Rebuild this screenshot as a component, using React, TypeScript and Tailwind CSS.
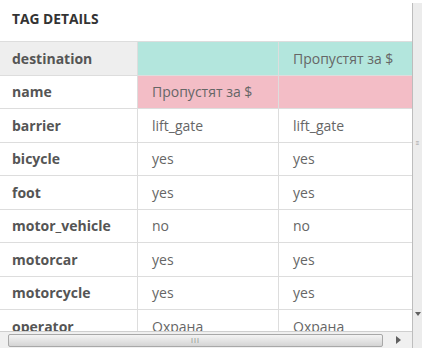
const rows: { key: string; a: string; b: string; tone?: "teal" | "pink" }[] = [
  { key: "destination", a: "", b: "Пропустят за $", tone: "teal" },
  { key: "name", a: "Пропустят за $", b: "", tone: "pink" },
  { key: "barrier", a: "lift_gate", b: "lift_gate" },
  { key: "bicycle", a: "yes", b: "yes" },
  { key: "foot", a: "yes", b: "yes" },
  { key: "motor_vehicle", a: "no", b: "no" },
  { key: "motorcar", a: "yes", b: "yes" },
  { key: "motorcycle", a: "yes", b: "yes" },
  { key: "operator", a: "Охрана", b: "Охрана" },
];

export default function App() {
  return (
    <div
      className="flex h-[348px] w-[422px] overflow-hidden bg-white"
      style={{ fontFamily: '"Open Sans", sans-serif' }}
    >
      <div className="flex w-[412px] flex-col">
        <div className="flex-1 overflow-hidden">
          <h2 className="px-3 pt-[9px] pb-[13px] text-[13.8px] leading-[19px] font-bold text-[#333]">
            TAG DETAILS
          </h2>
          <div className="w-[420px] border-t border-[#ddd]">
            {rows.map((r) => {
              const bg =
                r.tone === "teal"
                  ? "bg-[#b3e6dd]"
                  : r.tone === "pink"
                    ? "bg-[#f3bdc6]"
                    : "bg-white";
              return (
                <div key={r.key} className="flex h-[33.5px] border-b border-[#ddd] text-[14px]">
                  <div
                    className={`flex w-[138px] shrink-0 items-center border-r border-[#ddd] pl-3 font-bold text-[#555] ${
                      r.key === "destination" ? "bg-[#eeeeee]" : "bg-white"
                    }`}
                  >
                    {r.key}
                  </div>
                  <div
                    className={`flex w-[141px] shrink-0 items-center border-r border-[#ddd] pl-[14px] text-[#666] ${bg}`}
                  >
                    {r.a}
                  </div>
                  <div className={`flex w-[141px] shrink-0 items-center pl-[14px] text-[#666] ${bg}`}>
                    {r.b}
                  </div>
                </div>
              );
            })}
          </div>
        </div>
        <div className="flex h-[17px] shrink-0 items-center border-t border-[#cfcfcf] bg-[#f0f0f0]">
          <div className="ml-[8px] flex h-[13px] w-[375px] items-center justify-center rounded-[2px] border border-[#a8a8a8] bg-gradient-to-b from-[#f4f4f4] to-[#d4d4d4]">
            <span className="text-[7px] leading-none tracking-[1px] text-[#888]">III</span>
          </div>
          <div className="flex flex-1 items-center justify-center">
            <svg width="6" height="8" viewBox="0 0 6 8">
              <path d="M1 0 L6 4 L1 8 Z" fill="#606060" />
            </svg>
          </div>
        </div>
      </div>
      <div className="flex w-[10px] flex-col pt-[3px]">
        <div className="flex flex-1 flex-col border-l border-[#bdbdbd] bg-[#ececec]">
          <div className="flex flex-1 items-center justify-center">
            <span className="text-[6px] leading-none text-[#999]">≡</span>
          </div>
          <div className="flex h-[65px] items-start justify-end pt-[29px] pr-[1px]">
            <svg width="6" height="4" viewBox="0 0 6 4">
              <path d="M0 0 L6 0 L3 4 Z" fill="#606060" />
            </svg>
          </div>
        </div>
      </div>
    </div>
  );
}
